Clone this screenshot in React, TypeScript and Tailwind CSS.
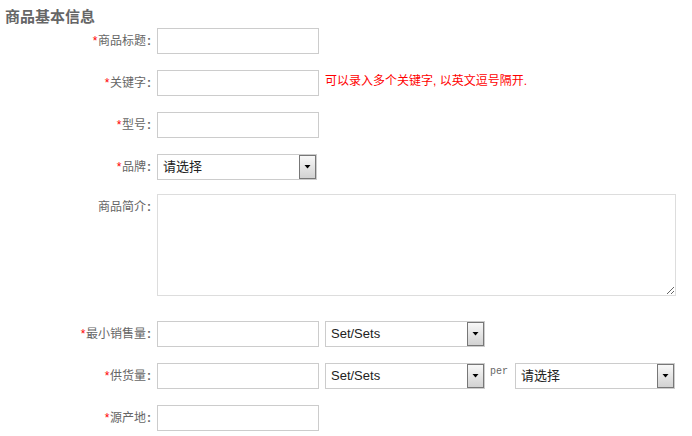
import React from "react";

const Arrow = () => (
  <svg width="7" height="4" viewBox="0 0 7 4">
    <polygon points="0.5,0 6.5,0 3.5,3.5" fill="#000" />
  </svg>
);

const Select = ({ text, latin }: { text: string; latin?: boolean }) => (
  <div className="flex h-[26px] w-[160px] shrink-0 border border-[#cccccc] bg-white">
    <div
      className={
        "flex flex-1 items-center pl-[5px] text-[13px] text-[#222222] " +
        (latin ? "font-['Liberation_Sans',sans-serif]" : "")
      }
    >
      {text}
    </div>
    <div className="flex w-[17px] items-center justify-center border border-[#777777] bg-gradient-to-b from-[#f8f8f8] to-[#d2d2d2]">
      <Arrow />
    </div>
  </div>
);

const Label = ({ text, star = true }: { text: string; star?: boolean }) => (
  <div className="flex h-[26px] w-[152px] shrink-0 items-center justify-end text-[12px] text-[#666666]">
    {star && <span className="inline-block w-[6px] text-center text-[#ff0000]">*</span>}
    <span>{text}</span>
    <span className="inline-block w-[6px] text-center font-bold">:</span>
  </div>
);

const Input = () => (
  <input className="h-[26px] w-[162px] shrink-0 border border-[#cccccc] bg-white outline-none" />
);

export default function App() {
  return (
    <div className="h-[436px] w-[692px] bg-white font-['Liberation_Sans','Noto_Sans_CJK_SC',sans-serif]">
      <div className="h-[28px] pl-[5px] pt-[8px] text-[15px] font-bold leading-[18px] text-[#666666]">
        商品基本信息
      </div>

      <div className="flex h-[26px] items-center">
        <Label text="商品标题" />
        <div className="ml-[5px] flex items-center">
          <Input />
        </div>
      </div>

      <div className="mt-[16px] flex h-[26px] items-center">
        <Label text="关键字" />
        <div className="ml-[5px] flex items-center">
          <Input />
          <span className="ml-[6px] pb-[5px] text-[12px] text-[#ff0000]">
            可以录入多个关键字, 以英文逗号隔开.
          </span>
        </div>
      </div>

      <div className="mt-[16px] flex h-[26px] items-center">
        <Label text="型号" />
        <div className="ml-[5px] flex items-center">
          <Input />
        </div>
      </div>

      <div className="mt-[16px] flex h-[26px] items-center">
        <Label text="品牌" />
        <div className="ml-[5px] flex items-center">
          <Select text="请选择" />
        </div>
      </div>

      <div className="mt-[14px] flex items-start">
        <Label text="商品简介" star={false} />
        <textarea className="ml-[5px] h-[102px] w-[519px] border border-[#dddddd] bg-white outline-none" />
      </div>

      <div className="mt-[25px] flex h-[26px] items-center">
        <Label text="最小销售量" />
        <div className="ml-[5px] flex items-center gap-[6px]">
          <Input />
          <Select text="Set/Sets" latin />
        </div>
      </div>

      <div className="mt-[16px] flex h-[26px] items-start">
        <Label text="供货量" />
        <div className="ml-[5px] flex items-start">
          <Input />
          <div className="ml-[6px]">
            <Select text="Set/Sets" latin />
          </div>
          <span className="ml-[5px] mt-[3px] font-['Liberation_Mono',monospace] text-[10px] leading-[12px] text-[#666666]">
            per
          </span>
          <div className="ml-[7px]">
            <Select text="请选择" />
          </div>
        </div>
      </div>

      <div className="mt-[16px] flex h-[26px] items-center">
        <Label text="源产地" />
        <div className="ml-[5px] flex items-center">
          <Input />
        </div>
      </div>
    </div>
  );
}
